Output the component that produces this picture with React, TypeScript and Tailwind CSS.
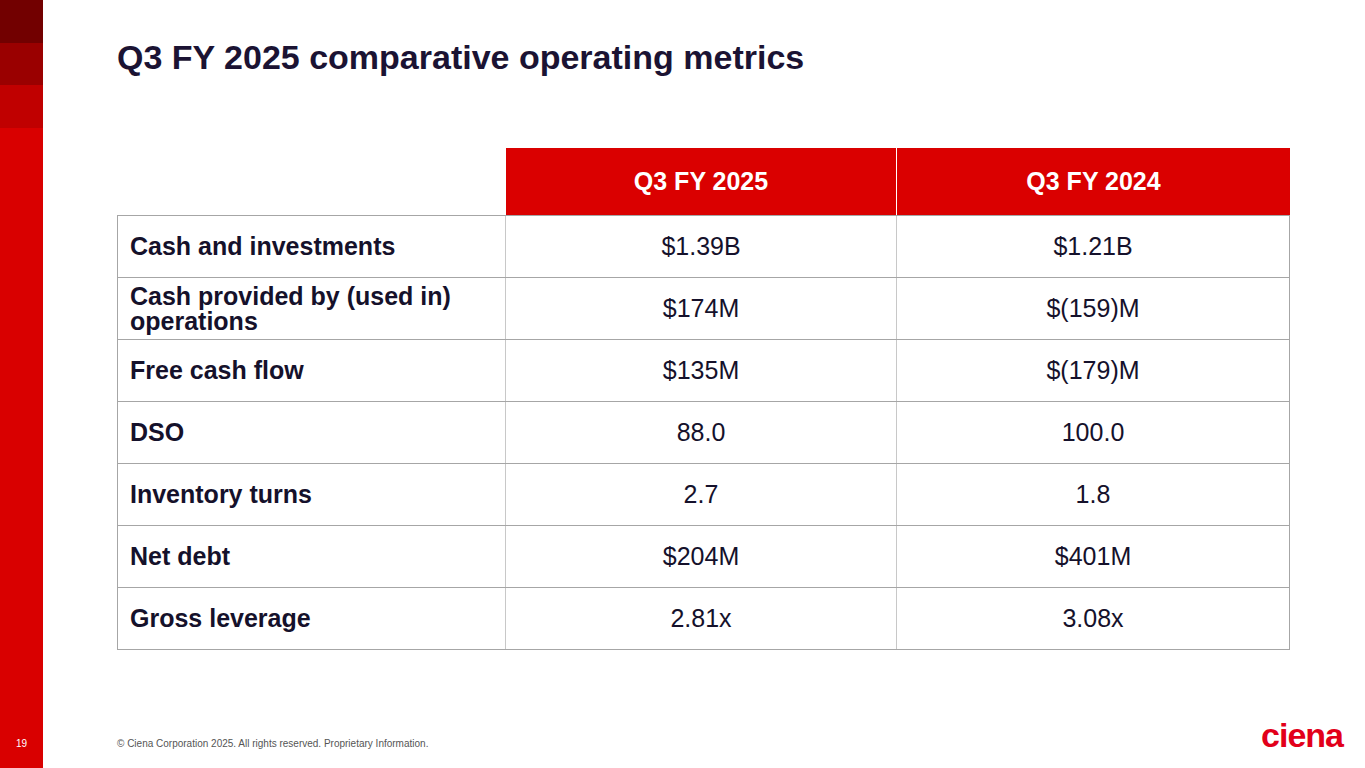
import React from "react";

const rows: { label: string; a: string; b: string }[] = [
  { label: "Cash and investments", a: "$1.39B", b: "$1.21B" },
  { label: "Cash provided by (used in) operations", a: "$174M", b: "$(159)M" },
  { label: "Free cash flow", a: "$135M", b: "$(179)M" },
  { label: "DSO", a: "88.0", b: "100.0" },
  { label: "Inventory turns", a: "2.7", b: "1.8" },
  { label: "Net debt", a: "$204M", b: "$401M" },
  { label: "Gross leverage", a: "2.81x", b: "3.08x" },
];

export default function App() {
  return (
    <div
      className="flex w-[1365px] h-[768px] bg-white overflow-hidden"
      style={{ fontFamily: '"Liberation Sans", Arial, sans-serif' }}
    >
      {/* Left red bar */}
      <div className="flex flex-col w-[43px] shrink-0 bg-[#d90000]">
        <div className="h-[43px] bg-[#720000]"></div>
        <div className="h-[42px] bg-[#9a0000]"></div>
        <div className="h-[43px] bg-[#c00000]"></div>
        <div className="flex-1"></div>
        <div className="h-[32px] pl-[16px] text-[10px] text-white">19</div>
      </div>

      {/* Main */}
      <div className="flex flex-col flex-1 pl-[74px] pr-[75px]">
        <h1 className="mt-[37px] h-[40px] text-[34px] font-bold leading-[40px] text-[#1b1333]">
          Q3 FY 2025 comparative operating metrics
        </h1>

        {/* Table */}
        <div className="mt-[71px] w-[1173px] text-[#15112b]">
          {/* Header */}
          <div className="flex h-[67px]">
            <div className="w-[389px]"></div>
            <div className="flex w-[391px] items-center justify-center bg-[#da0000] border-r border-white text-[25px] font-bold text-white">
              Q3 FY 2025
            </div>
            <div className="flex w-[393px] items-center justify-center bg-[#da0000] text-[25px] font-bold text-white">
              Q3 FY 2024
            </div>
          </div>
          {/* Body */}
          <div className="border-l border-r border-b border-[#a6a6a6]">
            {rows.map((r, i) => (
              <div
                key={i}
                className="flex h-[62px] border-t border-[#a6a6a6] text-[25px]"
              >
                <div className="flex w-[388px] items-center pl-[12px] pr-[12px] font-bold leading-[25px] border-r border-[#c8c8c8]">
                  {r.label}
                </div>
                <div className="flex w-[391px] items-center justify-center border-r border-[#c8c8c8]">
                  {r.a}
                </div>
                <div className="flex flex-1 items-center justify-center">{r.b}</div>
              </div>
            ))}
          </div>
        </div>

        {/* Footer */}
        <div className="mt-auto mb-[16px] flex items-end justify-between">
          <div className="mb-[1px] text-[10px] text-[#555555]">
            © Ciena Corporation 2025. All rights reserved. Proprietary Information.
          </div>
          <div className="-mr-[53px] text-[34px] font-bold leading-[34px] tracking-[-1px] text-[#e2001a]">
            ciena
          </div>
        </div>
      </div>
    </div>
  );
}
